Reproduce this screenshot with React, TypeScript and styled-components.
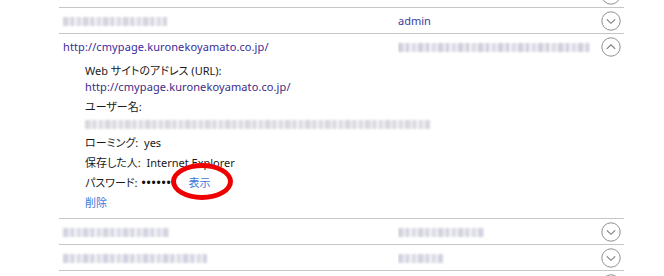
import React from "react";
import styled, { createGlobalStyle } from "styled-components";

const GlobalStyle = createGlobalStyle`
  html, body { margin: 0; padding: 0; background: #ffffff; }
  body {
    font-family: "Noto Sans", "Noto Sans CJK JP", sans-serif;
    font-size: 11px;
    color: #1a1a1a;
    overflow: hidden;
  }
`;

const Page = styled.div`
  width: 565px;
  margin-left: 59px;
  padding-top: 8px;
`;

const List = styled.div`
  display: flex;
  flex-direction: column;
  margin-top: -26px;
`;

const Item = styled.div`
  border-bottom: 1px solid #c6c6c6;
`;

const Header = styled.div`
  display: grid;
  grid-template-columns: 339px 1fr 24px;
  align-items: center;
  height: 25px;
`;

const Cell = styled.div<{ $inset?: number }>`
  padding-left: ${(p) => p.$inset ?? 0}px;
  white-space: nowrap;
  overflow: hidden;
  line-height: 16px;
`;

const SiteLink = styled.span`
  color: #3a2c9a;
  letter-spacing: 0.1px;
`;

const UserName = styled.span`
  color: #3c3ca0;
`;

const Blur = styled.span<{ $w: number; $tint: string }>`
  display: inline-block;
  width: ${(p) => p.$w}px;
  height: 9px;
  vertical-align: middle;
  background: repeating-linear-gradient(
    90deg,
    ${(p) => p.$tint} 0 5px,
    #e6e6ec 5px 8px,
    ${(p) => p.$tint} 8px 11px,
    #efeff3 11px 14px,
    #d3d4de 14px 18px,
    #f2f2f5 18px 20px
  );
  filter: blur(1.2px);
  opacity: 0.8;
`;

const ToggleButton = styled.div`
  display: flex;
  align-items: center;
  justify-content: center;
  width: 21px;
  height: 21px;
`;

const Details = styled.div`
  display: flex;
  flex-direction: column;
  gap: 4px;
  padding: 4px 0 7px 26px;
  font-feature-settings: "palt";
`;

const Field = styled.div`
  display: flex;
  flex-direction: column;
  line-height: 16px;
  color: #1a1a1a;
`;

const InlineField = styled.div`
  display: flex;
  align-items: center;
  line-height: 16px;
  color: #1a1a1a;
  white-space: nowrap;
`;

const Label = styled.span``;

const Value = styled.span<{ $link?: boolean }>`
  color: ${(p) => (p.$link ? "#3d2a86" : "#1a1a1a")};
  letter-spacing: ${(p) => (p.$link ? "0.1px" : "0")};
`;

const Dots = styled.span`
  margin-left: 4px;
  font-family: "Liberation Sans", sans-serif;
  font-size: 12px;
  letter-spacing: 0.8px;
  color: #111;
`;

const ActionLink = styled.span`
  position: relative;
  color: #3b78d8;
  cursor: pointer;
`;

const ShowLink = styled(ActionLink)`
  margin-left: 12px;
`;

const Annotation = styled.span`
  position: absolute;
  left: -18px;
  top: -12px;
  width: 62px;
  height: 37px;
  box-sizing: border-box;
  border: 5px solid #ee0000;
  border-radius: 50%;
  pointer-events: none;
`;

const Chevron: React.FC<{ up?: boolean }> = ({ up }) => (
  <svg width="20" height="20" viewBox="0 0 20 20">
    <circle cx="10" cy="10" r="9.2" fill="none" stroke="#8f8f8f" strokeWidth="1" />
    <path
      d={up ? "M5.8 11.8 L10 7.8 L14.2 11.8" : "M5.8 8.3 L10 12.3 L14.2 8.3"}
      fill="none"
      stroke="#7a7a7a"
      strokeWidth="1.1"
    />
  </svg>
);

type Row = { left?: React.ReactNode; right?: React.ReactNode; up?: boolean };

const ListRow: React.FC<Row & { children?: React.ReactNode }> = ({ left, right, up, children }) => (
  <Item>
    <Header>
      <Cell $inset={4}>{left}</Cell>
      <Cell>{right}</Cell>
      <ToggleButton>
        <Chevron up={up} />
      </ToggleButton>
    </Header>
    {children}
  </Item>
);

export default function App() {
  return (
    <>
      <GlobalStyle />
      <Page>
        <List>
          <ListRow />
          <ListRow left={<Blur $w={104} $tint="#cbcad8" />} right={<UserName>admin</UserName>} />
          <ListRow
            up
            left={<SiteLink>http://cmypage.kuronekoyamato.co.jp/</SiteLink>}
            right={<Blur $w={192} $tint="#c4c4d6" />}
          >
            <Details>
              <Field>
                <Label>Web サイトのアドレス (URL):</Label>
                <Value $link>http://cmypage.kuronekoyamato.co.jp/</Value>
              </Field>
              <Field>
                <Label>ユーザー名:</Label>
                <Value>
                  <Blur $w={345} $tint="#cfcfd4" />
                </Value>
              </Field>
              <InlineField>
                <Label>ローミング:</Label>
                <Value>&nbsp;&nbsp;yes</Value>
              </InlineField>
              <InlineField>
                <Label>保存した人:</Label>
                <Value>&nbsp;&nbsp;Internet Explorer</Value>
              </InlineField>
              <InlineField>
                <Label>パスワード:</Label>
                <Dots>•••••••</Dots>
                <ShowLink>
                  表示
                  <Annotation />
                </ShowLink>
              </InlineField>
              <InlineField>
                <ActionLink>削除</ActionLink>
              </InlineField>
            </Details>
          </ListRow>
          <ListRow left={<Blur $w={106} $tint="#c8cad9" />} right={<Blur $w={86} $tint="#c9c9d8" />} />
          <ListRow left={<Blur $w={144} $tint="#c4c8da" />} right={<Blur $w={45} $tint="#c5cad8" />} />
          <ListRow left={<Blur $w={120} $tint="#c9cbd8" />} right={<Blur $w={70} $tint="#c9c9d8" />} />
        </List>
      </Page>
    </>
  );
}
